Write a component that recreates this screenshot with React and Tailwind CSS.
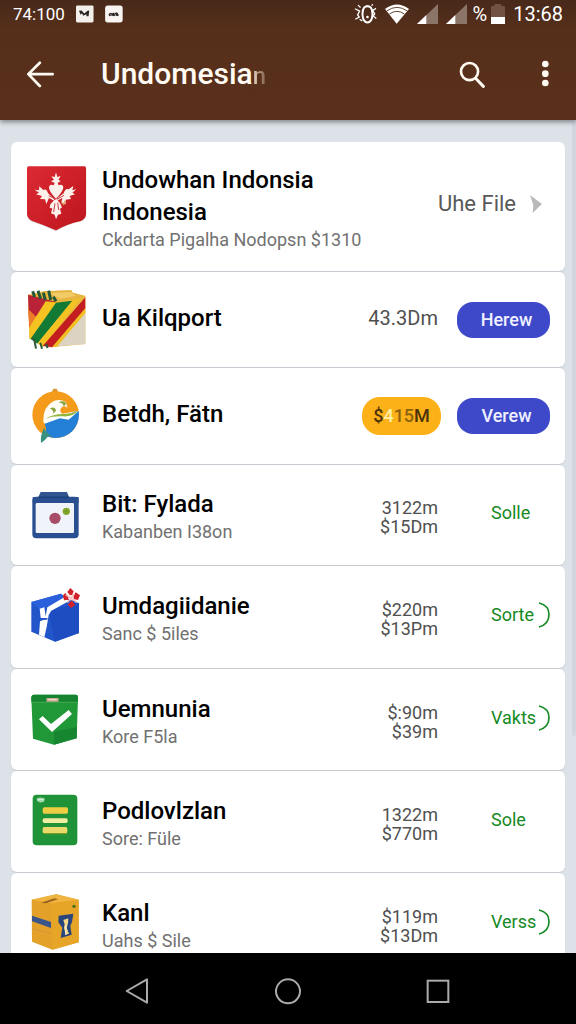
const CrestIcon = () => (
  <svg viewBox="81 92 180 198" className="mb-4 h-[66px] w-15 shrink-0" aria-hidden="true">
    <defs>
      <linearGradient id="crest" x1="0" y1="0" x2="1" y2="1">
        <stop offset="0" stopColor="#dc2a33" />
        <stop offset="1" stopColor="#bd151e" />
      </linearGradient>
    </defs>
    <path d="M86 96H254Q259 96 259 101V238Q258 251 243 258Q198 268 168 288Q132 270 98 260Q82 253 81 240V101Q81 96 86 96Z" fill="#d9c9c9" />
    <path d="M86 93H253Q258 93 258 98V236Q258 249 243 257Q198 267 168 285Q132 269 97 257Q82 250 81 237V98Q81 93 86 93Z" fill="url(#crest)" />
    <g fill="#fdf1ec">
      <path d="M168 111L172 125L182 122L175 133L182 137L173 143L176 150Q187 144 190 155Q190 168 168 190Q146 168 147 155Q150 144 161 150L164 143L153 138L162 133L154 123L164 125Z" />
      <path d="M104 163L117 165L118 153L130 164Q140 158 144 174L162 190L163 196L147 188L139 206L135 192L120 191L126 182L108 177L117 172Z" />
      <path d="M229 162L217 165L220 152L206 162Q196 158 191 174L174 187L171 196L187 188L184 202L197 207L197 193L213 191L209 182L225 177L217 172Z" />
      <path d="M163 194L151 207L149 218L157 219L153 234L164 238L168 252L174 238L184 235L180 221L186 216L180 204L170 191Z" />
    </g>
    <path d="M164 190L146 181M174 190L192 180M165 204L161 230M173 202L176 224" stroke="#c9434a" strokeWidth="3" fill="none" />
    <path d="M184 201L191 207L196 196" stroke="#d9a05e" strokeWidth="4" fill="none" />
  </svg>
);

const StripedBoxIcon = () => (
  <svg viewBox="81 44 180 180" className="size-15 shrink-0" aria-hidden="true">
    <path d="M84 58L130 48L214 45L218 52L256 62V206L150 216L88 190Z" fill="#e8b93b" />
    <path d="M84 58L170 80L88 158Z" fill="#b92237" />
    <path d="M84 100L112 128L88 156Z" fill="#ec7c2b" />
    <path d="M137 78L182 82L90 192L88 156Z" fill="#f5c321" />
    <path d="M168 82L217 76L112 205L92 190Z" fill="#127a34" />
    <path d="M217 76L240 70L130 214L112 205Z" fill="#f5c321" />
    <path d="M256 66V100L158 216L128 212Z" fill="#c31d1f" />
    <path d="M256 98V115L174 214L156 216Z" fill="#f2bd22" />
    <path d="M256 113V206L172 213Z" fill="#ddd3c2" />
    <path d="M130 48L214 45L218 52L256 62L172 80Z" fill="#e8b544" />
    <path d="M150 54L213 50L228 62L180 70Z" fill="#f1cb66" />
    <path d="M98 48L104 65M114 46L122 70M130 52L136 74M146 46L152 74M160 64L168 78" stroke="#245638" strokeWidth="9" />
    <path d="M96 190L103 194L108 220M121 202L126 220M138 206L143 218" stroke="#2c5a3b" strokeWidth="6" fill="none" />
  </svg>
);

const WaveGlobeIcon = () => (
  <svg viewBox="81 333 180 168" className="h-14 w-15 shrink-0" aria-hidden="true">
    <defs>
      <clipPath id="globe"><circle cx="167" cy="413" r="70" /></clipPath>
    </defs>
    <path d="M155 346L160 335H170L175 346Z" fill="#db9430" />
    <g clipPath="url(#globe)">
      <rect x="90" y="340" width="155" height="150" fill="#f49b1c" />
      <path d="M130 435Q128 390 160 373Q180 364 198 376L202 392Q190 383 183 394Q177 406 188 410L240 401V430L150 455Z" fill="#fffdf5" />
      <path d="M134 440Q160 413 198 416Q225 402 240 402V490H130Q145 470 134 440Z" fill="#2480d6" />
      <path d="M135 426Q160 411 195 414L236 402L206 428L180 424L134 440Z" fill="#fff" />
      <path d="M136 425Q160 410 194 411Q215 410 236 401Q216 420 190 418Q160 416 136 425Z" fill="#91b63b" />
      <path d="M150 395Q165 386 168 401L160 410Q161 398 150 395ZM176 376Q190 368 199 379L191 389Q191 379 176 376Z" fill="#88a53d" />
    </g>
    <path d="M132 453Q120 477 123 498Q135 491 145 477L158 480Q142 472 132 453Z" fill="#3a9180" />
  </svg>
);

const WindowBagIcon = () => (
  <svg viewBox="81 90 180 144" className="h-12 w-15 shrink-0" aria-hidden="true">
    <path d="M122 93H201L207 108H236V125H98V108H115Z" fill="#31558f" />
    <rect x="97" y="107" width="139" height="125" rx="12" fill="#294f91" />
    <path d="M116 106H206V112H116Z" fill="#21447f" />
    <rect x="107" y="126" width="115" height="90" rx="4" fill="#f1f3fa" />
    <circle cx="165" cy="172" r="17" fill="#a74d67" />
    <circle cx="199" cy="151" r="11" fill="#85a82c" />
    <circle cx="199" cy="151" r="5" fill="#729b25" />
  </svg>
);

const BlueGiftIcon = () => (
  <svg viewBox="81 380 180 165" className="mb-1 h-[55px] w-15 shrink-0" aria-hidden="true">
    <path d="M94 422L183 397L190 404L237 426V515L165 541L94 511Z" fill="#2355ca" />
    <path d="M94 422L183 397L192 407L143 439L119 444Z" fill="#2b60dc" />
    <path d="M146 450L237 426V515L165 541Z" fill="#1d4dc1" />
    <path d="M119 442L133 438L137 465L142 438L194 407L207 419L154 448L146 461L140 497L133 528L117 520L120 480L136 474L122 469Z" fill="#fff" />
    <path d="M122 470H143L142 475H122Z" fill="#2355ca" />
    <g fill="#d32029">
      <path d="M202 392L211 380L221 390L214 407Z" />
      <path d="M220 404L227 393L240 402L234 416L220 413Z" />
      <path d="M215 417L226 431L213 440L203 430Z" />
      <path d="M206 406L196 395L189 402L192 417L206 415Z" />
    </g>
    <circle cx="213" cy="409" r="8" fill="#fff2f0" />
    <path d="M197 400L230 423M224 397L202 424" stroke="#f7bdbc" strokeWidth="4" />
  </svg>
);

const CheckBagIcon = () => (
  <svg viewBox="81 85 180 153" className="h-[51px] w-15 shrink-0" aria-hidden="true">
    <path d="M102 87H227Q235 87 234 97L230 218L162 237L99 219L94 96Q94 88 102 87Z" fill="#219838" />
    <path d="M94 108H234V95Q234 87 226 87H102Q94 88 94 96Z" fill="#168331" />
    <path d="M162 198L231 184L230 218L162 237Z" fill="#168630" />
    <path d="M94 110H234" stroke="#42a64d" strokeWidth="3" />
    <rect x="139" y="97" width="37" height="11" rx="3" fill="#c9a994" />
    <path d="M145 102H170" stroke="#f1dac8" strokeWidth="4" />
    <path d="M117 161L128 151L153 175L206 133L216 145L156 199Z" fill="#fff" />
  </svg>
);

const ListSheetIcon = () => (
  <svg viewBox="81 388 180 156" className="mb-1 h-13 w-15 shrink-0" aria-hidden="true">
    <rect x="98" y="390" width="134" height="152" rx="12" fill="#209238" />
    <path d="M110 401Q122 395 135 402L132 411L121 414L111 409Z" fill="#9bd4a3" />
    <path d="M114 405H130" stroke="#e4f5df" strokeWidth="3" />
    <rect x="128" y="428" width="76" height="19" rx="5" fill="#edce42" />
    <rect x="128" y="461" width="75" height="14" rx="5" fill="#f0eda1" />
    <rect x="128" y="487" width="74" height="19" rx="5" fill="#e9da6b" />
    <path d="M131 507H201" stroke="#7c9a27" strokeWidth="3" />
  </svg>
);

const YellowBoxIcon = () => (
  <svg viewBox="81 99 180 168" className="mb-1 h-14 w-15 shrink-0" aria-hidden="true">
    <path d="M95 116L169 100L236 116V244L157 266L96 242Z" fill="#e3a12a" />
    <path d="M95 116L169 100L236 116L153 127Z" fill="#f0b540" />
    <path d="M153 127L236 116V244L157 266Z" fill="#e7a528" />
    <path d="M123 125L163 112L174 115L138 127Z" fill="#9b641a" />
    <path d="M96 164L153 183V201L96 181Z" fill="#38568c" />
    <path d="M97 203L153 217" stroke="#d79838" strokeWidth="4" />
    <path d="M176 164L220 158L216 184L211 194L215 221L182 231L187 200L175 184Z" fill="#29467c" />
    <path d="M190 177L205 172L204 187L200 200L207 218L197 221L192 201L194 190Z" fill="#f5d78c" />
    <path d="M198 194L197 222" stroke="#fff5dc" strokeWidth="3" />
    <circle cx="222" cy="136" r="5" fill="#486e22" />
  </svg>
);

const Signal = () => (
  <svg viewBox="0 0 63 60" className="h-5 w-[21px]" aria-hidden="true">
    <path d="M0 60L63 0V60Z" fill="#8b7568" />
    <path d="M0 60L28 33V60Z" fill="#fff" />
  </svg>
);

const StatusBar = () => (
  <div className="flex h-7 items-center justify-between px-[13px] text-white">
    <div className="flex items-center">
      <span className="text-[17px] leading-none">74:100</span>
      <svg viewBox="228 14 142 53" className="ml-[11px] h-[18px] w-[47px]" aria-hidden="true">
        <rect x="228" y="15" width="53" height="51" rx="4" fill="#f3efeb" />
        <path d="M237 31L245 30L253 39L263 31L268 30L266 47L260 47L259 41L250 46L246 38L242 43Z" fill="#292422" />
        <rect x="316" y="15" width="53" height="51" rx="8" fill="#f7f4f1" />
        <path d="M326 42Q332 34 337 39L341 36L344 39L350 35L353 37L358 44L352 47L348 44L342 47L336 45L329 47Z" fill="#292422" />
        <path d="M331 43H335M345 42H348" stroke="#f7f4f1" strokeWidth="2" />
      </svg>
    </div>
    <div className="flex items-center">
      <svg viewBox="194 10 70 60" className="h-5 w-[23px]" fill="none" stroke="#fff" strokeWidth="6" aria-hidden="true">
        <path d="M225 20Q235 12 245 20Q251 28 250 44Q248 65 235 66Q222 65 220 44Q219 28 225 20Z" />
        <path d="M197 24L211 31L205 43L210 49L198 56M206 13L214 20M261 23L251 29L257 40L252 46L262 54M247 14L252 11M211 56L219 61" strokeWidth="4" />
        <circle cx="235" cy="49" r="2" strokeWidth="4" />
      </svg>
      <svg viewBox="290 10 72 60" className="ml-2 h-5 w-6" aria-hidden="true">
        <path d="M290 25Q326 -2 362 25L325 69Z" fill="#fff" />
        <path d="M295 31Q326 9 357 31M303 40Q326 24 348 40" fill="none" stroke="#67472f" strokeWidth="3" />
      </svg>
      <div className="ml-2 flex gap-2">
        <Signal />
        <Signal />
      </div>
      <span className="ml-1.5 text-xl leading-none">%</span>
      <svg viewBox="0 0 42 60" className="ml-1 h-5 w-3.5" aria-hidden="true">
        <path d="M11 0H30V5H37Q42 5 42 10V60H0V10Q0 5 5 5H11Z" fill="#725343" />
        <path d="M0 39H42V60H0Z" fill="#fff" />
      </svg>
      <span className="ml-2 text-xl leading-none">13:68</span>
    </div>
  </div>
);

const AppBar = () => (
  <div className="flex h-[92px] items-center pr-[17px] pl-[27px] text-[#fffaf2]">
    <button type="button" aria-label="Back">
      <svg viewBox="81 180 80 80" className="size-[27px]" fill="none" stroke="currentColor" strokeWidth="8" strokeLinecap="round" strokeLinejoin="round" aria-hidden="true">
        <path d="M119 185L85 219L119 254M86 219H157" />
      </svg>
    </button>
    <h1 className="ml-[47px] flex-1 text-[30px] leading-9 font-medium">
      Undomesia<span className="bg-linear-to-r from-[#e6d8ca] to-[#7d5a45] bg-clip-text text-2xl text-transparent">n</span>
    </h1>
    <button type="button" aria-label="Search">
      <svg viewBox="512 178 80 82" className="size-[27px]" fill="none" stroke="currentColor" strokeWidth="8" strokeLinecap="round" aria-hidden="true">
        <circle cx="543" cy="210" r="26" />
        <path d="M562 231L585 255" strokeWidth="9" />
      </svg>
    </button>
    <button type="button" aria-label="More options" className="ml-[45px]">
      <svg viewBox="0 0 84 84" className="size-7" fill="currentColor" aria-hidden="true">
        <circle cx="43" cy="12" r="10" />
        <circle cx="43" cy="41" r="10" />
        <circle cx="43" cy="69" r="10" />
      </svg>
    </button>
  </div>
);

const Price = ({ lines }) =>
  lines.length === 1 ? (
    <span className="mb-1 pr-[3px] text-xl text-[#505050]">{lines[0]}</span>
  ) : (
    <div className="flex flex-col pt-1 pr-[3px] text-right text-lg leading-[19px] text-[#505050]">
      {lines.map((line) => (
        <span key={line}>{line}</span>
      ))}
    </div>
  );

const Pill = ({ children }) => (
  <button type="button" className="ml-4 h-9 w-[93px] shrink-0 rounded-2xl bg-[#3e49c9] pl-1.5 text-lg font-medium text-[#eef0ff]">
    {children}
  </button>
);

const GreenAction = ({ label, mark }) => (
  <a href="#open" className="mb-1 ml-4 flex w-[93px] shrink-0 items-center justify-between pl-[34px] text-lg text-[#168a24]">
    {label}
    {mark && (
      <svg viewBox="0 0 36 78" className="h-[26px] w-3 shrink-0" fill="none" stroke="currentColor" strokeWidth="5" aria-hidden="true">
        <path d="M3 3Q33 10 33 38Q33 66 3 75" />
      </svg>
    )}
  </a>
);

const Row = ({ icon, title, subtitle, height, children }) => (
  <li className={`flex items-center rounded-md bg-white pr-[15px] pl-4 shadow-[0_1px_1px_#c3c9ce] ${height}`}>
    {icon}
    <div className={`ml-[15px] min-w-0 flex-1 ${subtitle ? "pt-0.5" : "pb-1"}`}>
      <h2 className="text-2xl leading-8 font-medium text-black">{title}</h2>
      {subtitle && <p className="text-lg leading-6 whitespace-nowrap text-[#717171]">{subtitle}</p>}
    </div>
    {children}
  </li>
);

export default function App() {
  return (
    <div className="flex h-screen flex-col overflow-hidden bg-[#dce2e8] font-[Roboto,sans-serif]">
      <header className="relative z-10 shrink-0 bg-[#57301c] bg-linear-to-b from-[#48291a] via-[#562f1b] via-25% to-[#59301b] shadow-[0_2px_5px_#7d8286]">
        <StatusBar />
        <AppBar />
      </header>
      <main className="relative min-h-0 flex-1 overflow-hidden px-[11px] pt-[22px]">
        <ul className="flex flex-col gap-px">
          <Row
            icon={<CrestIcon />}
            height="min-h-[129px]"
            title={<>Undowhan Indonsia<br />Indonesia</>}
            subtitle="Ckdarta Pigalha Nodopsn $1310"
          >
            <a href="#file" className="mb-1.5 flex items-center gap-3.5 pr-2 text-[22px] whitespace-nowrap text-[#595959]">
              Uhe File
              <svg viewBox="0 0 36 54" className="h-[18px] w-3" fill="#b8b9bb" aria-hidden="true">
                <path d="M0 0L36 27L8 54L10 30Z" />
              </svg>
            </a>
          </Row>
          <Row icon={<StripedBoxIcon />} height="min-h-[95px]" title="Ua Kilqport">
            <Price lines={["43.3Dm"]} />
            <Pill>Herew</Pill>
          </Row>
          <Row icon={<WaveGlobeIcon />} height="min-h-24" title="Betdh, Fätn">
            <span className="flex h-[38px] w-[79px] items-center justify-center rounded-[18px] bg-[#fbb117] text-lg font-medium text-[#4b320c]">
              $<span className="text-[#fff0a8]">4</span><span className="text-[#8d620f]">15</span>M
            </span>
            <Pill>Verew</Pill>
          </Row>
          <Row icon={<WindowBagIcon />} height="min-h-25" title="Bit: Fylada" subtitle="Kabanben I38on">
            <Price lines={["3122m", "$15Dm"]} />
            <GreenAction label="Solle" />
          </Row>
          <Row icon={<BlueGiftIcon />} height="min-h-[102px]" title="Umdagiidanie" subtitle="Sanc $ 5iles">
            <Price lines={["$220m", "$13Pm"]} />
            <GreenAction label="Sorte" mark />
          </Row>
          <Row icon={<CheckBagIcon />} height="min-h-[101px]" title="Uemnunia" subtitle="Kore F5la">
            <Price lines={["$:90m", "$39m"]} />
            <GreenAction label="Vakts" mark />
          </Row>
          <Row icon={<ListSheetIcon />} height="min-h-[101px]" title="Podlovlzlan" subtitle="Sore: Füle">
            <Price lines={["1322m", "$770m"]} />
            <GreenAction label="Sole" />
          </Row>
          <Row icon={<YellowBoxIcon />} height="min-h-[101px]" title="Kanl" subtitle="Uahs $ Sile">
            <Price lines={["$119m", "$13Dm"]} />
            <GreenAction label="Verss" mark />
          </Row>
        </ul>
        <div className="absolute top-0 right-0 h-[74%] w-1 rounded-b-sm bg-[#d1d7df]" />
      </main>
      <nav aria-label="System" className="flex h-[71px] shrink-0 items-center bg-black px-[63px] pt-1 text-[#aaa]">
        <button type="button" aria-label="Back" className="flex flex-1 justify-center">
          <svg viewBox="0 0 84 84" className="size-7" fill="none" stroke="currentColor" strokeWidth="6" strokeLinejoin="round" aria-hidden="true">
            <path d="M8 42L69 7V77Z" />
          </svg>
        </button>
        <button type="button" aria-label="Home" className="flex flex-1 justify-center">
          <svg viewBox="0 0 84 84" className="size-7" fill="none" stroke="currentColor" strokeWidth="6" aria-hidden="true">
            <circle cx="42" cy="43" r="36" />
          </svg>
        </button>
        <button type="button" aria-label="Recent apps" className="flex flex-1 justify-center">
          <svg viewBox="0 0 84 84" className="size-7" fill="none" stroke="currentColor" strokeWidth="6" aria-hidden="true">
            <rect x="11" y="11" width="62" height="64" />
          </svg>
        </button>
      </nav>
    </div>
  );
}
